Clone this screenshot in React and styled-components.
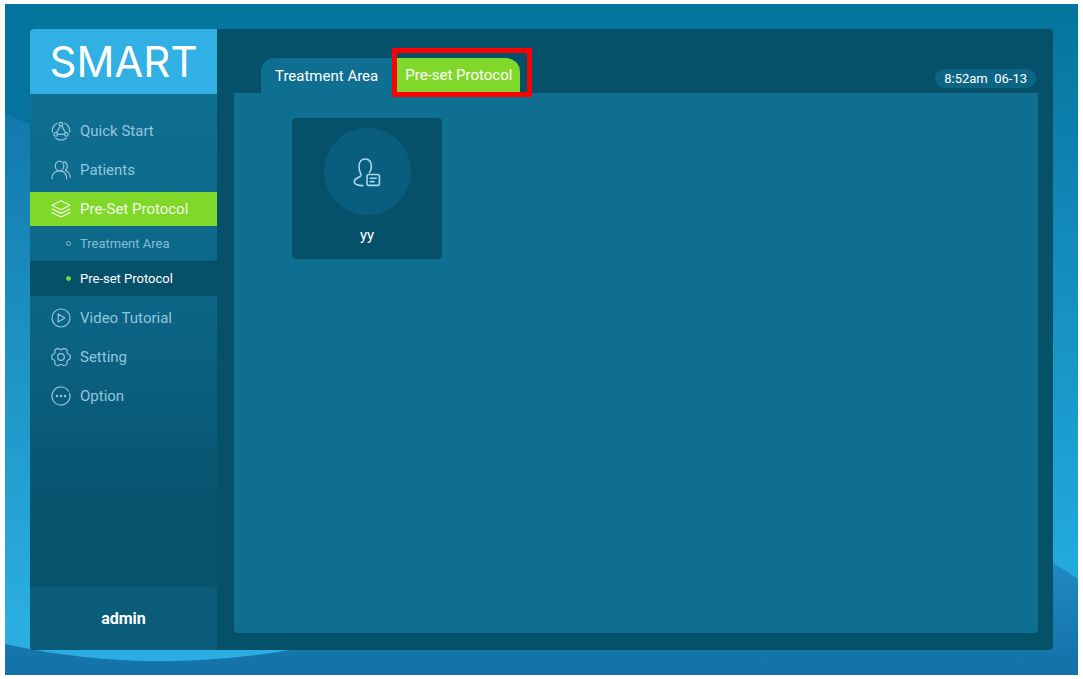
import React from "react";
import styled, { createGlobalStyle } from "styled-components";

const GlobalStyle = createGlobalStyle`
  * { box-sizing: border-box; }
  body { margin: 0; background: #fff; font-family: Roboto, "Liberation Sans", sans-serif; }
  button { font: inherit; border: 0; background: none; padding: 0; cursor: pointer; }
  ul { list-style: none; margin: 0; padding: 0; }
`;

const Page = styled.div`
  display: flex;
  min-height: 100vh;
  padding: 4px 5px;
`;

const Screen = styled.div`
  position: relative;
  flex: 1;
  display: flex;
  padding: 25px;
  background: #0a78a5;
`;

const Backdrop = styled.svg`
  position: absolute;
  inset: 0;
  width: 100%;
  height: 100%;
`;

const Console = styled.div`
  position: relative;
  flex: 1;
  display: flex;
  gap: 17px;
  border-radius: 4px;
  overflow: hidden;
  background: #055169;
`;

const Sidebar = styled.aside`
  width: 187px;
  flex: none;
  display: flex;
  flex-direction: column;
  background: linear-gradient(#0f6f91 65px, #0b6585 280px, #07526c 500px);
`;

const Logo = styled.div`
  height: 65px;
  display: flex;
  align-items: center;
  justify-content: center;
  background: #31b0e4;
  color: #fff;
  font: 400 42px/65px Inter, sans-serif;
`;

const Nav = styled.nav`
  flex: 1;
  padding-top: 20px;
`;

const NavList = styled.ul`
  display: flex;
  flex-direction: column;
  gap: 5px;
`;

const NavButton = styled.button`
  display: flex;
  align-items: center;
  gap: 9px;
  width: 100%;
  height: 34px;
  && { padding-left: 21px; font-size: 15px; background: ${(p) => (p.$active ? "#7fd82a" : "none")}; }
  color: ${(p) => (p.$active ? "#f2fbe4" : "#93c5de")};
  svg { width: 20px; height: 20px; flex: none; }
`;

const SubButton = styled.button`
  display: flex;
  align-items: center;
  gap: 9px;
  width: 100%;
  height: 35px;
  && { padding-left: 36px; font-size: 13px; background: ${(p) => (p.$active ? "#055169" : "none")}; }
  color: ${(p) => (p.$active ? "#fff" : "#84bcd6")};
`;

const Dot = styled.span`
  width: 5px;
  height: 5px;
  border-radius: 50%;
  border: 1px solid ${(p) => (p.$active ? "#6bdd3c" : "#84bcd6")};
  background: ${(p) => (p.$active ? "#6bdd3c" : "none")};
`;

const User = styled.footer`
  height: 63px;
  display: flex;
  align-items: center;
  justify-content: center;
  border-top-right-radius: 4px;
  background: #0a5c79;
  color: #fff;
  font-size: 16px;
  font-weight: 700;
`;

const Main = styled.main`
  flex: 1;
  min-width: 0;
  display: flex;
  flex-direction: column;
  padding: 0 15px 17px 0;
`;

const Header = styled.header`
  height: 64px;
  display: flex;
  align-items: flex-end;
  justify-content: space-between;
  padding-left: 27px;
`;

const Tabs = styled.div`
  display: flex;
  align-items: flex-end;
`;

const Tab = styled.button`
  height: 35px;
  && { padding: 0 14px; font-size: 15px; background: #0f6f91; }
  border-radius: 14px 0 0 0;
  color: #fff;
`;

const Highlight = styled.div`
  position: relative;
  z-index: 1;
  height: 49px;
  margin-bottom: -4px;
  padding: 5px 7px 0 0;
  border: 5px solid #fe0000;
  background: #055169;
`;

const ActiveTab = styled(Tab)`
  display: block;
  height: 34px;
  && { padding: 0 8px; background: #7fd82a; }
  border-radius: 0 14px 0 0;
`;

const Clock = styled.time`
  margin: 0 2px 5px 0;
  padding: 0 9px;
  border-radius: 10px;
  background: #0d6586;
  color: #fff;
  font-size: 13px;
  line-height: 19px;
  white-space: pre;
`;

const Content = styled.section`
  flex: 1;
  padding: 25px 58px;
  border-radius: 0 0 3px 3px;
  background: #0f6f91;
`;

const Card = styled.button`
  display: flex;
  flex-direction: column;
  align-items: center;
  gap: 11px;
  width: 150px;
  height: 141px;
  border-radius: 4px;
  && { padding-top: 10px; background: #055169; font-size: 15px; }
  color: #fff;
`;

const Avatar = styled.span`
  display: flex;
  align-items: center;
  justify-content: center;
  width: 87px;
  height: 87px;
  border-radius: 50%;
  background: #0a5e7d;
  svg { width: 28px; height: 30px; }
`;

const line = {
  fill: "none",
  stroke: "currentColor",
  strokeWidth: 1.2,
  strokeLinecap: "round",
  strokeLinejoin: "round",
  "aria-hidden": true,
};

const QuickIcon = () => (
  <svg viewBox="0 0 20 20" {...line}>
    <circle cx="10" cy="3.2" r="1.8" />
    <circle cx="4.600" cy="13.400" r="1.800" />
    <circle cx="15.400" cy="13.400" r="1.800" />
    <path d="M9.200 4.900 5.500 11.800M10.800 4.900l3.700 6.900M6.500 13.400h7" />
    <path d="M6.300 2.200A8.800 8.800 0 0 0 1.300 10.800M13.700 2.200a8.800 8.800 0 0 1 5 8.600M4.800 17.200a8.800 8.800 0 0 0 10.400 0" />
  </svg>
);

const PatientsIcon = () => (
  <svg viewBox="0 0 20 20" {...line}>
    <ellipse cx="8.500" cy="6" rx="4.300" ry="4.800" />
    <path d="M1 18.800c0-4.800 2.800-8 7.500-8s7.200 3.200 7.200 8M12.500 1.800c4.300.2 5 5.800 1.800 8.500M14.500 10.500c2.800 1 4.500 3.500 4.700 6.800" />
  </svg>
);

const LayersIcon = () => (
  <svg viewBox="0 0 20 20" {...line}>
    <path d="m10 1.800 9 4.400-9 4.500-9-4.500zM1 10l9 4.400 9-4.400M1 13.600 10 18l9-4.400" />
  </svg>
);

const VideoIcon = () => (
  <svg viewBox="0 0 20 20" {...line}>
    <circle cx="10" cy="10" r="9" />
    <path d="M7.200 6v8l6.600-4z" />
  </svg>
);

const SettingIcon = () => (
  <svg viewBox="0 0 20 20" {...line}>
    <circle cx="10" cy="10" r="3.300" />
    <path d="M18.700 7.800Q20 10 18.700 12.200Q15.200 13 16.250 16.500Q15 18.700 12.500 18.650Q10 16 7.500 18.650Q5 18.700 3.750 16.500Q4.800 13 1.300 12.200Q0 10 1.300 7.800Q4.800 7 3.750 3.500Q5 1.300 7.500 1.350Q10 4 12.500 1.350Q15 1.300 16.250 3.500Q15.200 7 18.700 7.800z" />
  </svg>
);

const OptionIcon = () => (
  <svg viewBox="0 0 20 20" {...line}>
    <path d="M17.500 5A9 9 0 1 0 19 10a9 9 0 0 0-.4-2.500" />
    <g fill="currentColor" stroke="none">
      <circle cx="6" cy="10" r="1.200" />
      <circle cx="10" cy="10" r="1.200" />
      <circle cx="14" cy="10" r="1.200" />
    </g>
  </svg>
);

const PatientCardIcon = () => (
  <svg viewBox="0 0 28 30" {...line} stroke="#a9d8ef" strokeWidth="1.600">
    <path d="M10 28.600c-4.500 0-8.800-1-8.800-4 0-3.800 6-4 6.800-6 .5-1.500-2-4-2-8.800C6 4.500 8.500 2 12.100 2s6.200 2.500 6.200 7.500c0 2.500-.5 4.500-1.800 6" />
    <rect x="14" y="17.500" width="12.400" height="10.900" rx="2" />
    <path d="M17.200 21.200h6M17.200 24.600h4" />
  </svg>
);

const sections = [
  { label: "Quick Start", icon: QuickIcon },
  { label: "Patients", icon: PatientsIcon },
  {
    label: "Pre-Set Protocol",
    icon: LayersIcon,
    active: true,
    children: [{ label: "Treatment Area" }, { label: "Pre-set Protocol", active: true }],
  },
  { label: "Video Tutorial", icon: VideoIcon },
  { label: "Setting", icon: SettingIcon },
  { label: "Option", icon: OptionIcon },
];

export default function App() {
  return (
    <Page>
      <GlobalStyle />
      <Screen>
        <Backdrop viewBox="0 0 1073 671" preserveAspectRatio="none" aria-hidden="true">
          <defs>
            <linearGradient id="sky" x1="0" y1="0" x2="0" y2="1">
              <stop offset="0" stopColor="#04749b" />
              <stop offset="0.35" stopColor="#128abb" />
              <stop offset="0.85" stopColor="#22abde" />
            </linearGradient>
            <linearGradient id="leftWave" x1="0" y1="0" x2="0" y2="1">
              <stop offset="0" stopColor="#117aab" />
              <stop offset="1" stopColor="#2db3e6" />
            </linearGradient>
            <linearGradient id="sea" x1="0" y1="0" x2="0" y2="1">
              <stop offset="0" stopColor="#2089c4" />
              <stop offset="1" stopColor="#1371a6" />
            </linearGradient>
          </defs>
          <rect width="1073" height="671" fill="url(#sky)" />
          <path d="M0 0h30v120Q12 118 0 109z" fill="#04749f" />
          <path d="M0 109Q12 118 30 122V671H0z" fill="url(#leftWave)" />
          <path d="M0 630h320v41H0z" fill="#2cade1" />
          <path d="M0 671V640Q140 671 285 646L1040 555Q1060 566 1073 575V671z" fill="url(#sea)" />
        </Backdrop>
        <Console>
          <Sidebar>
            <Logo>SMART</Logo>
            <Nav aria-label="Main">
              <NavList>
                {sections.map(({ label, icon: Icon, active, children }) => (
                  <li key={label}>
                    <NavButton $active={active}>
                      <Icon />
                      {label}
                    </NavButton>
                    {children && (
                      <ul>
                        {children.map((c) => (
                          <li key={c.label}>
                            <SubButton $active={c.active}>
                              <Dot $active={c.active} />
                              {c.label}
                            </SubButton>
                          </li>
                        ))}
                      </ul>
                    )}
                  </li>
                ))}
              </NavList>
            </Nav>
            <User>admin</User>
          </Sidebar>
          <Main>
            <Header>
              <Tabs role="tablist">
                <Tab role="tab" aria-selected="false">Treatment Area</Tab>
                <Highlight>
                  <ActiveTab role="tab" aria-selected="true">Pre-set Protocol</ActiveTab>
                </Highlight>
              </Tabs>
              <Clock>{"8:52am  06-13"}</Clock>
            </Header>
            <Content>
              <Card>
                <Avatar>
                  <PatientCardIcon />
                </Avatar>
                yy
              </Card>
            </Content>
          </Main>
        </Console>
      </Screen>
    </Page>
  );
}
